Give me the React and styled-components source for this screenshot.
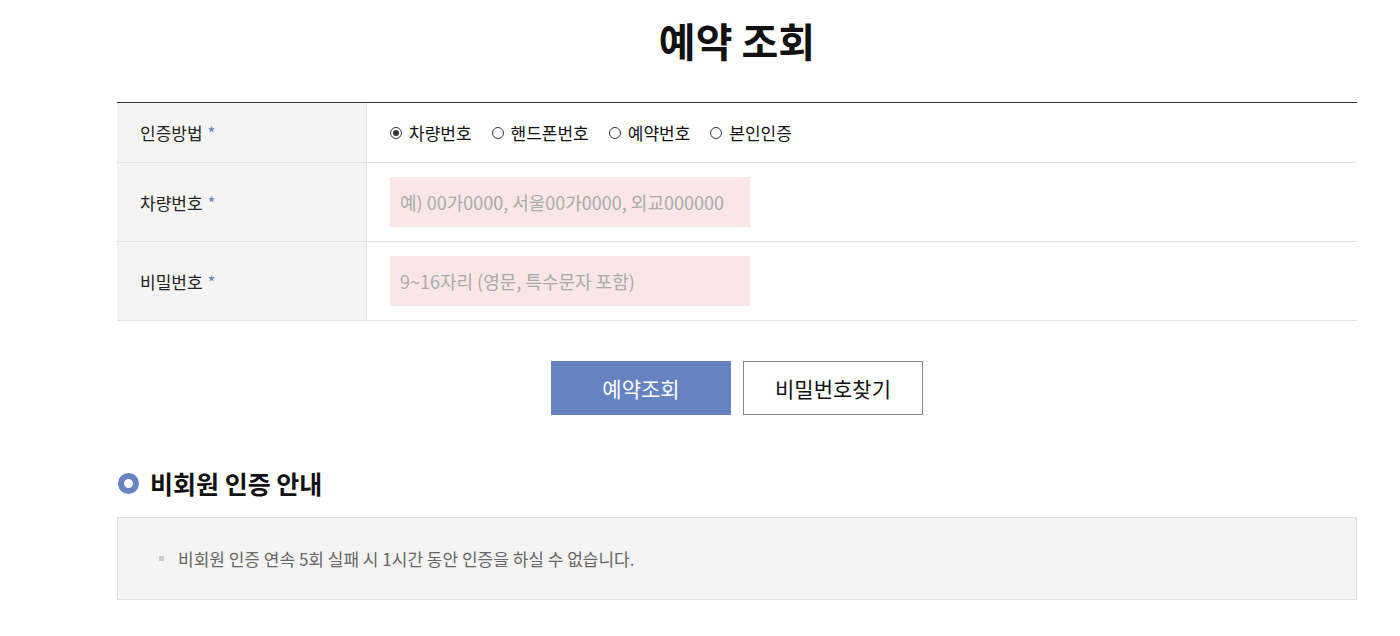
import React from "react";
import styled, { createGlobalStyle } from "styled-components";

const GlobalStyle = createGlobalStyle`
  body {
    margin: 0;
    background: #fff;
    font-family: "Noto Sans CJK KR", "Noto Sans", sans-serif;
    color: #222;
  }
  * { box-sizing: border-box; }
`;

const Page = styled.div`
  width: 1240px;
  margin-left: 117px;
  padding-top: 10px;
`;

const Title = styled.h1`
  margin: 0 0 32px;
  font-size: 40px;
  line-height: 60px;
  font-weight: 700;
  text-align: center;
  color: #111;
`;

const Table = styled.div`
  border-top: 1px solid #333;
`;

const Row = styled.div`
  display: grid;
  grid-template-columns: 250px 1fr;
  height: ${(p) => p.$h}px;
  border-bottom: 1px solid #e2e2e2;
`;

const Label = styled.div`
  display: flex;
  align-items: center;
  padding-left: 23px;
  background: #f4f4f4;
  border-right: 1px solid #e2e2e2;
  font-size: 17px;
  color: #222;
`;

const Star = styled.span`
  color: #6682c0;
  margin-left: 5px;
`;

const Cell = styled.div`
  display: flex;
  align-items: center;
  padding-left: 23px;
`;

const RadioGroup = styled.div`
  display: flex;
  gap: 20px;
`;

const RadioItem = styled.label`
  display: flex;
  align-items: center;
  gap: 7px;
  font-size: 17px;
  color: #111;
`;

const RadioDot = styled.span`
  width: 12px;
  height: 12px;
  border-radius: 50%;
  border: 1px solid #333;
  display: inline-flex;
  align-items: center;
  justify-content: center;
  &::after {
    content: "";
    width: 6px;
    height: 6px;
    border-radius: 50%;
    background: ${(p) => (p.$on ? "#333" : "transparent")};
  }
`;

const Input = styled.input`
  width: 360px;
  height: 50px;
  border: none;
  background: #f9e7e7;
  padding: 0 10px;
  font-family: inherit;
  font-size: 18px;
  outline: none;
  &::placeholder { color: #aaa; }
`;

const Buttons = styled.div`
  display: flex;
  justify-content: center;
  gap: 12px;
  margin-top: 40px;
`;

const Button = styled.button`
  width: 180px;
  height: 54px;
  font-family: inherit;
  font-size: 21px;
  border: 1px solid ${(p) => (p.$primary ? "#6682c0" : "#888")};
  background: ${(p) => (p.$primary ? "#6682c0" : "#fff")};
  color: ${(p) => (p.$primary ? "#fff" : "#111")};
  cursor: pointer;
`;

const SectionTitle = styled.h2`
  display: flex;
  align-items: center;
  gap: 11px;
  margin: 50px 0 16px;
  font-size: 25px;
  line-height: 36px;
  font-weight: 700;
  color: #111;
`;

const Ring = styled.span`
  width: 21px;
  height: 21px;
  border-radius: 50%;
  border: 6px solid #6682c0;
  margin-left: 1px;
`;

const InfoBox = styled.ul`
  margin: 0;
  list-style: none;
  background: #f4f4f4;
  border: 1px solid #e0e0e0;
  padding: 28px 0 28px 41px;
`;

const InfoItem = styled.li`
  display: flex;
  align-items: center;
  gap: 14px;
  font-size: 17px;
  line-height: 25px;
  color: #666;
  &::before {
    content: "";
    width: 5px;
    height: 5px;
    background: #ccc;
  }
`;

const methods = ["차량번호", "핸드폰번호", "예약번호", "본인인증"];

export default function App() {
  return (
    <>
      <GlobalStyle />
      <Page>
        <Title>예약 조회</Title>
        <Table>
          <Row $h={60}>
            <Label>
              인증방법<Star>*</Star>
            </Label>
            <Cell>
              <RadioGroup>
                {methods.map((m, i) => (
                  <RadioItem key={m}>
                    <RadioDot $on={i === 0} />
                    {m}
                  </RadioItem>
                ))}
              </RadioGroup>
            </Cell>
          </Row>
          <Row $h={79}>
            <Label>
              차량번호<Star>*</Star>
            </Label>
            <Cell>
              <Input placeholder="예) 00가0000, 서울00가0000, 외교000000" />
            </Cell>
          </Row>
          <Row $h={79}>
            <Label>
              비밀번호<Star>*</Star>
            </Label>
            <Cell>
              <Input type="password" placeholder="9~16자리 (영문, 특수문자 포함)" />
            </Cell>
          </Row>
        </Table>
        <Buttons>
          <Button $primary>예약조회</Button>
          <Button>비밀번호찾기</Button>
        </Buttons>
        <SectionTitle>
          <Ring />
          비회원 인증 안내
        </SectionTitle>
        <InfoBox>
          <InfoItem>비회원 인증 연속 5회 실패 시 1시간 동안 인증을 하실 수 없습니다.</InfoItem>
        </InfoBox>
      </Page>
    </>
  );
}
